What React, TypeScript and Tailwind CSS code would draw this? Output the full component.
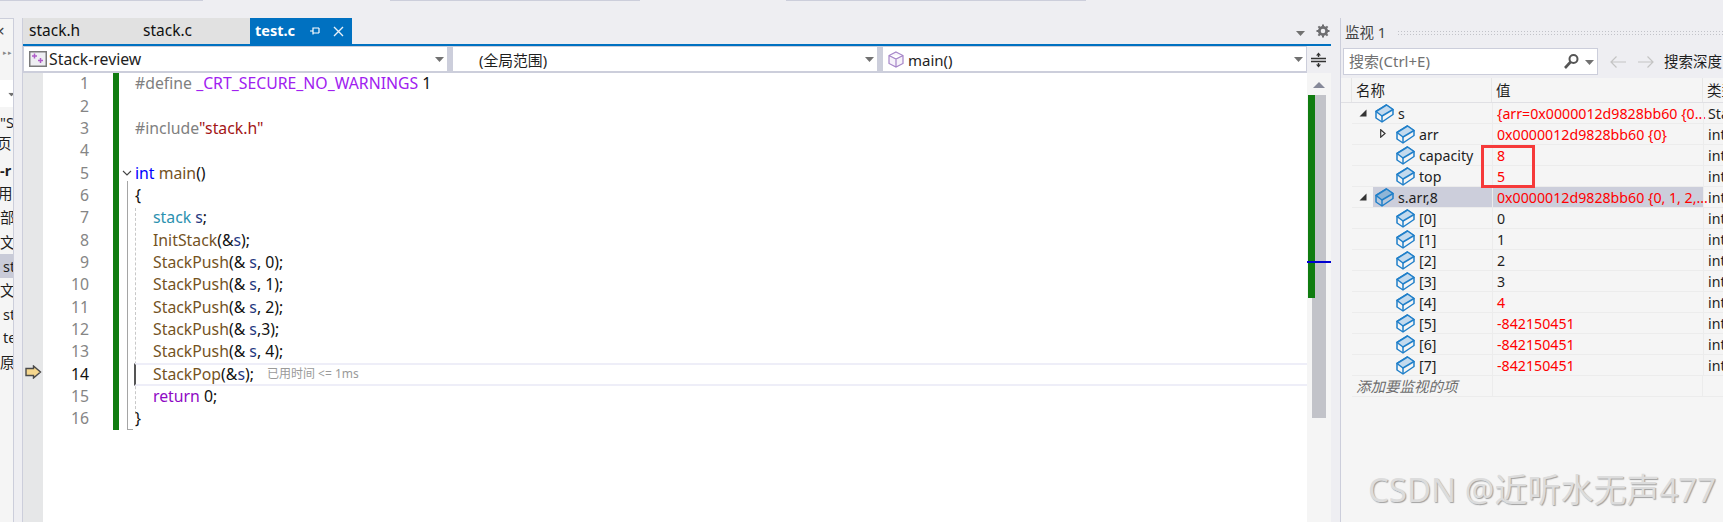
const font = "[font-family:'Noto_Sans','Noto_Sans_CJK_SC',sans-serif]";

const sideRows = [
  { text: '"S', cls: "mt-[3px] h-[24px]" },
  { text: "页", cls: "h-[18px] -ml-[3px]" },
  { text: "-r", cls: "h-[30px] pt-[7px] font-bold" },
  { text: "用", cls: "h-[22px] -ml-[2px]" },
  { text: "部", cls: "h-[26px]" },
  { text: "文件", cls: "h-[24px]" },
  { text: "st", cls: "h-[24px] bg-[#c9cbd8] pl-[3px]" },
  { text: "文件", cls: "h-[24px]" },
  { text: "st", cls: "h-[24px] pl-[3px]" },
  { text: "te", cls: "h-[22px] pl-[3px]" },
  { text: "原", cls: "h-[28px]" },
];

function BoxIcon({ selected }: { selected?: boolean }) {
  return (
    <svg width="19" height="19" viewBox="0 0 19 19" className="shrink-0">
      <path d="M1 7.5 L11.5 1 L18 5.5 L18 10.5 L7 18 L1 14 Z" fill={selected ? "#b7c8dc" : "#f5f5f5"} stroke="#1f7fc9" strokeWidth="1.5" strokeLinejoin="round" />
      <path d="M1 7.5 L11.5 1 L18 5.5 L7 12 Z" fill={selected ? "#8fb5d6" : "#c3daee"} stroke="#1f7fc9" strokeWidth="1.5" strokeLinejoin="round" />
      <path d="M7 12 L7 18" stroke="#1f7fc9" strokeWidth="1.5" />
    </svg>
  );
}

function Tri({ cls }: { cls: string }) {
  return (
    <svg width="9" height="5" viewBox="0 0 9 5" className={cls}>
      <path d="M0 0 H9 L4.5 5 Z" fill="#717171" />
    </svg>
  );
}

function Dropdown({ width, children }: { width: string; children: React.ReactNode }) {
  return (
    <div className={`flex items-center bg-white h-[24px] relative ${width}`}>
      {children}
      <Tri cls="absolute right-[3px] top-[10px]" />
    </div>
  );
}

type Seg = [string, string];
const keyword = "text-[#8f08c4]";
const fn = "text-[#74531f]";
const local = "text-[#1f377f]";
const plain = "text-[#111111]";

const push = (arg: string, tail: string): Seg[] => [
  ["StackPush", fn],
  ["(&", plain],
  [" s", local],
  [arg, plain],
  [tail, plain],
];

const lines: { indent?: boolean; segs: Seg[] }[] = [
  { segs: [["#define ", "text-[#808080]"], ["_CRT_SECURE_NO_WARNINGS", "text-[#a020f0]"], [" 1", plain]] },
  { segs: [] },
  { segs: [["#include", "text-[#808080]"], ['"stack.h"', "text-[#a31515]"]] },
  { segs: [] },
  { segs: [["int", "text-[#0000ff]"], [" main", fn], ["()", plain]] },
  { segs: [["{", plain]] },
  { indent: true, segs: [["stack", "text-[#2b91af]"], [" s", local], [";", plain]] },
  { indent: true, segs: [["InitStack", fn], ["(&", plain], ["s", local], [");", plain]] },
  { indent: true, segs: push(", 0", ");") },
  { indent: true, segs: push(", 1", ");") },
  { indent: true, segs: push(", 2", ");") },
  { indent: true, segs: push(",3", ");") },
  { indent: true, segs: push(", 4", ");") },
  { indent: true, segs: [["StackPop", fn], ["(&", plain], ["s", local], [");", plain]] },
  { indent: true, segs: [["return", keyword], [" 0;", plain]] },
  { segs: [["}", plain]] },
];

const red = "text-[#ff0000]";
const dark = "text-[#1e1e1e]";
const watchRows = [
  { name: "s", value: "{arr=0x0000012d9828bb60 {0...", type: "Sta", depth: 0, color: red, arrow: "open" },
  { name: "arr", value: "0x0000012d9828bb60 {0}", type: "int", depth: 1, color: red, arrow: "closed" },
  { name: "capacity", value: "8", type: "int", depth: 1, color: red },
  { name: "top", value: "5", type: "int", depth: 1, color: red },
  { name: "s.arr,8", value: "0x0000012d9828bb60 {0, 1, 2,...", type: "int", depth: 0, color: red, arrow: "open", selected: true },
  { name: "[0]", value: "0", type: "int", depth: 1, color: dark },
  { name: "[1]", value: "1", type: "int", depth: 1, color: dark },
  { name: "[2]", value: "2", type: "int", depth: 1, color: dark },
  { name: "[3]", value: "3", type: "int", depth: 1, color: dark },
  { name: "[4]", value: "4", type: "int", depth: 1, color: red },
  { name: "[5]", value: "-842150451", type: "int", depth: 1, color: red },
  { name: "[6]", value: "-842150451", type: "int", depth: 1, color: red },
  { name: "[7]", value: "-842150451", type: "int", depth: 1, color: red },
];

export default function App() {
  return (
    <div className={`relative w-[1723px] h-[522px] overflow-hidden bg-[#eeeef2] flex flex-col ${font}`}>
      {/* top edge of the toolbar above */}
      <div className="flex h-px shrink-0">
        <div className="w-[203px] bg-[#cccedb]" />
        <div className="ml-[187px] w-[250px] bg-[#cccedb]" />
        <div className="ml-[146px] w-[300px] bg-[#cccedb]" />
      </div>

      <div className="flex flex-1 pt-[17px] min-h-0">
        {/* solution explorer, mostly cut off */}
        <div className="w-[14px] shrink-0 bg-[#f5f5f5] border-r border-t border-[#cccedb] overflow-hidden text-[14.5px] text-[#1e1e1e]">
          <div className="h-[61px] relative">
            <span className="absolute left-[-5px] top-[1px] text-[17px] leading-[22px] text-[#444]">×</span>
            <span className="absolute left-[3px] top-[29px] text-[7px] leading-[10px] text-[#888] tracking-[1px]">▸▸</span>
          </div>
          <div className="h-[27px] bg-white relative">
            <Tri cls="absolute left-[7px] top-[12px] scale-75" />
          </div>
          {sideRows.map((r, i) => (
            <div key={i} className={`${r.cls} flex items-center whitespace-nowrap leading-none`}>
              {r.text}
            </div>
          ))}
        </div>

        {/* editor */}
        <div className="ml-[8px] w-[1309px] shrink-0 flex flex-col border-l border-[#cccedb]">
          <div className="flex h-[26px] shrink-0 items-stretch text-[15.5px]">
            <div className="w-[227px] bg-[#e1e1e1] flex items-center text-[#111]">
              <span className="ml-[6px] w-[114px]">stack.h</span>
              <span>stack.c</span>
            </div>
            <div className="w-[102px] bg-[#0071c1] flex items-center text-white pl-[5px]">
              <span className="font-bold text-[14.5px]">test.c</span>
              <svg width="12" height="10" viewBox="0 0 12 10" className="ml-[14px]">
                <path d="M1 5 H4 M4 1.5 V8.5 M4 2 H10 M4 7 H10 M10 2 V7" stroke="#fff" strokeWidth="1.2" fill="none" />
              </svg>
              <svg width="11" height="11" viewBox="0 0 11 11" className="ml-[12px]">
                <path d="M1 1 L10 10 M10 1 L1 10" stroke="#e8f1f9" strokeWidth="1.4" />
              </svg>
            </div>
            <div className="flex-1 relative">
              <Tri cls="absolute right-[26px] top-[13px]" />
              <svg width="14" height="14" viewBox="0 0 14 14" className="absolute right-[1px] top-[6px]">
                <circle cx="7" cy="7" r="3.7" fill="none" stroke="#6d6d70" strokeWidth="2.8" />
                <path d="M7 0.5 V2.5 M7 11.5 V13.5 M0.5 7 H2.5 M11.5 7 H13.5 M2.4 2.4 L3.8 3.8 M10.2 10.2 L11.6 11.6 M2.4 11.6 L3.8 10.2 M10.2 3.8 L11.6 2.4" stroke="#6d6d70" strokeWidth="2" />
              </svg>
            </div>
          </div>
          <div className="h-[2px] shrink-0 bg-[#0071c1]" />

          {/* navigation bar */}
          <div className="flex h-[27px] shrink-0 bg-[#cccedb] pt-px pb-[2px] pl-px text-[#1e1e1e] leading-none">
            <Dropdown width="w-[423px]">
              <svg width="18" height="16" viewBox="0 0 18 16" className="ml-[5px]">
                <rect x="0.75" y="0.75" width="16.5" height="14.5" fill="#eeeef2" stroke="#7a7a7a" strokeWidth="1.5" />
                <path d="M3 5 H8 M5.5 2.5 V7.5 M9 9.5 H14 M11.5 7 V12" stroke="#b05cc8" strokeWidth="1.5" />
              </svg>
              <span className="ml-[2px] pt-[2px] text-[15.8px]">Stack-review</span>
            </Dropdown>
            <div className="w-[6px]" />
            <Dropdown width="w-[424px]">
              <span className="ml-[26px] pt-[2px] text-[14.8px]">(全局范围)</span>
            </Dropdown>
            <div className="w-[6px]" />
            <Dropdown width="w-[423px]">
              <svg width="16" height="17" viewBox="0 0 16 17" className="ml-[5px]">
                <path d="M8 1 L15 4.5 V12.5 L8 16 L1 12.5 V4.5 Z M1 4.5 L8 8 L15 4.5 M8 8 V16" fill="#f6f2fa" stroke="#a584c8" strokeWidth="1.2" />
              </svg>
              <span className="ml-[4px] pt-[2px] text-[15px]">main()</span>
            </Dropdown>
            <div className="flex-1 ml-px -mt-px -mb-[2px] bg-[#eeeef2] flex items-center justify-center">
              <svg width="15" height="16" viewBox="0 0 15 16" className="ml-[-1px]">
                <path d="M0 6.5 H15 M0 9.5 H15" stroke="#333" strokeWidth="1.3" />
                <path d="M7.5 0.5 L10 3.5 H8.2 V5 H6.8 V3.5 H5 Z M7.5 15.5 L10 12.5 H8.2 V11 H6.8 V12.5 H5 Z" fill="#333" />
              </svg>
            </div>
          </div>

          {/* code area */}
          <div className="flex flex-1 min-h-0">
            <div className="w-[20px] shrink-0 bg-[#e6e7e8] relative">
              <svg width="17" height="14" viewBox="0 0 17 14" className="absolute left-[2px] top-[292px]">
                <path d="M1 3.5 H8.5 V1 L15.5 7 L8.5 13 V10.5 H1 Z" fill="#f5d78e" stroke="#4a4a4a" strokeWidth="1.4" strokeLinejoin="miter" />
              </svg>
            </div>

            <div className="relative flex-1 bg-white overflow-hidden">
              {/* change bar, fold line and guides */}
              <div className="absolute left-[70px] top-0 w-[6px] h-[357px] bg-[#107c10]" />
              <div className="absolute left-[84px] top-[108px] w-px h-[248px] bg-[#a5a5a5]" />
              <div className="absolute left-[84px] top-[356px] w-[6px] h-px bg-[#a5a5a5]" />
              <div className="absolute left-[92px] top-[135px] h-[206px] border-l border-dashed border-[#c8c8c8]" />
              <svg width="10" height="6" viewBox="0 0 10 6" className="absolute left-[79px] top-[97px]">
                <path d="M1 1 L5 5 L9 1" fill="none" stroke="#444" strokeWidth="1.1" />
              </svg>

              {lines.map((line, i) => {
                const current = i === 13;
                return (
                  <div key={i} className="flex h-[22.33px] items-center text-[15.8px] leading-none whitespace-pre">
                    <span className={`w-[46px] text-right ${current ? "text-[#111]" : "text-[#858585]"}`}>{i + 1}</span>
                    <div
                      className={`flex-1 h-full flex items-center relative ${
                        current
                          ? "ml-[45px] pl-[17px] border-y-2 border-[#eeeef8] border-l-2 border-l-[#555555]"
                          : line.indent
                            ? "ml-[46px] pl-[18px]"
                            : "ml-[46px]"
                      }`}
                    >
                      {line.segs.map((s, j) => (
                        <span key={j} className={s[1]}>{s[0]}</span>
                      ))}
                      {current && (
                        <span className="ml-[13px] text-[12px] text-[#9a9a9a]">已用时间 &lt;= 1ms</span>
                      )}
                    </div>
                  </div>
                );
              })}
            </div>

            {/* scrollbar with change marks */}
            <div className="relative w-[24px] shrink-0 bg-[#f5f5f5]">
              <svg width="12" height="6" viewBox="0 0 12 6" className="absolute left-[6px] top-[9px]">
                <path d="M0 6 L6 0 L12 6 Z" fill="#868999" />
              </svg>
              <div className="absolute left-[5px] top-[22px] w-[14px] h-[323px] bg-[#c2c3c9]" />
              <div className="absolute left-[1px] top-[22px] w-[7px] h-[203px] bg-[#107c10]" />
              <div className="absolute left-0 top-[188px] w-[24px] h-[2px] bg-[#0000d0]" />
            </div>
          </div>
        </div>

        {/* watch window */}
        <div className="ml-[9px] flex-1 min-w-0 flex flex-col border-l border-[#cccedb]">
          <div className="h-[30px] shrink-0 flex items-center pl-[4px] text-[14.5px] text-[#444]">
            <span className="whitespace-nowrap">监视 1</span>
            <div className="ml-[11px] flex-1 h-[6px] bg-[radial-gradient(#c2c3c9_1px,transparent_1px)] bg-[length:3px_3px]" />
          </div>
          <div className="h-[27px] shrink-0 flex items-center whitespace-nowrap text-[15px] overflow-hidden">
            <div className="ml-[2px] w-[255px] h-full shrink-0 bg-white border border-[#cccedb] flex items-center pl-[5px] text-[#717171] relative">
              搜索(Ctrl+E)
              <svg width="17" height="17" viewBox="0 0 17 17" className="absolute left-[219px] top-[4px]">
                <circle cx="10.5" cy="6" r="4" fill="none" stroke="#555" strokeWidth="2" />
                <path d="M7.5 9 L2 15" stroke="#555" strokeWidth="2.6" />
              </svg>
              <Tri cls="absolute left-[241px] top-[11px]" />
            </div>
            <svg width="16" height="12" viewBox="0 0 16 12" className="ml-[12px] shrink-0">
              <path d="M16 6 H1 M6.5 0.5 L1 6 L6.5 11.5" fill="none" stroke="#c4c4c4" strokeWidth="1.2" />
            </svg>
            <svg width="16" height="12" viewBox="0 0 16 12" className="ml-[12px] shrink-0">
              <path d="M0 6 H15 M9.5 0.5 L15 6 L9.5 11.5" fill="none" stroke="#c4c4c4" strokeWidth="1.2" />
            </svg>
            <span className="ml-[10px] text-[#1e1e1e] text-[14.5px]">搜索深度</span>
          </div>

          {/* watch grid */}
          <div className="flex-1 mt-[3px] bg-[#f5f5f5] text-[14.2px] leading-none whitespace-nowrap overflow-hidden">
            <div className="flex h-[25px] items-center border-b border-[#e0e0e4] text-[#1e1e1e] text-[14.5px]">
              <div className="w-[11px] h-full shrink-0 border-r border-[#e6e6e6]" />
              <div className="w-[140px] h-full shrink-0 pl-[4px] flex items-center border-r border-[#e6e6e6]">名称</div>
              <div className="w-[211px] h-full shrink-0 pl-[4px] flex items-center border-r border-[#e6e6e6]">值</div>
              <div className="pl-[4px] shrink-0">类型</div>
            </div>
            {watchRows.map((r) => (
              <div key={r.name} className="flex h-[21px] items-center ml-[11px]">
                <div className="w-[140px] h-full shrink-0 flex items-center border-b border-[#ececec] relative">
                  {r.selected && <div className="absolute left-[21px] right-0 top-0 bottom-0 bg-[#cccedb]" />}
                  {r.arrow === "open" && (
                    <svg width="8" height="8" viewBox="0 0 8 8" className="absolute left-[7px] top-[6px]">
                      <path d="M7.5 0.5 V7.5 H0.5 Z" fill="#333" />
                    </svg>
                  )}
                  {r.arrow === "closed" && (
                    <svg width="6" height="9" viewBox="0 0 6 9" className="absolute left-[28px] top-[5px]">
                      <path d="M0.7 0.8 L5 4.5 L0.7 8.2 Z" fill="#fff" stroke="#333" strokeWidth="1.2" />
                    </svg>
                  )}
                  <div className={`relative flex items-center gap-[4px] ${r.depth ? "ml-[44px]" : "ml-[23px]"}`}>
                    <BoxIcon selected={r.selected} />
                    <span className="text-[#1e1e1e] pt-[3px]">{r.name}</span>
                  </div>
                </div>
                <div className={`w-[211px] h-full shrink-0 flex items-center pl-[4px] pt-[3px] border-l border-b border-[#ececec] ${r.color} ${r.selected ? "bg-[#cccedb]" : ""}`}>
                  {r.value}
                </div>
                <div className="flex-1 h-full flex items-center pl-[4px] pt-[3px] border-l border-b border-[#ececec] text-[#1e1e1e]">{r.type}</div>
              </div>
            ))}
            <div className="flex h-[21px] items-center ml-[11px] border-b border-[#ececec]">
              <div className="w-[140px] shrink-0 pl-[4px] italic text-[14.5px] text-[#6d6d6d]">添加要监视的项</div>
              <div className="w-[211px] h-full shrink-0 border-x border-[#ececec]" />
            </div>
          </div>
        </div>
      </div>

      {/* annotation drawn over the screenshot */}
      <div className="absolute left-[1368px] top-[470px] text-[33px] leading-[40px] whitespace-nowrap text-[#dcdcdc] [text-shadow:1px_1px_1px_#a0a0a0]">
        CSDN @近听水无声477
      </div>
      <div className="absolute left-[1481px] top-[145px] w-[54px] h-[43px] border-[3px] border-[#f63a3a]" />
    </div>
  );
}
